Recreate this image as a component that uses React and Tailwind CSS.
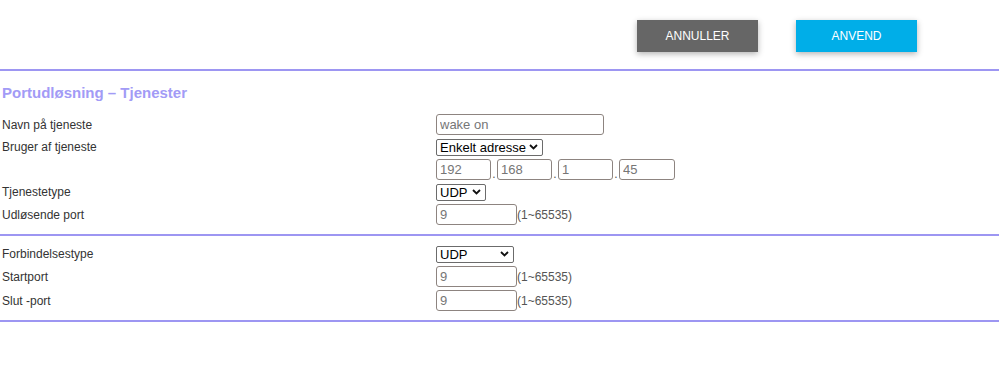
import React from "react";

const Chevron = () => (
  <svg width="9" height="6" viewBox="0 0 9 6" className="pointer-events-none absolute right-[5px] top-1/2 -translate-y-1/2">
    <path d="M1 1l3.5 3.5L8 1" fill="none" stroke="#111" strokeWidth="1.8" />
  </svg>
);

function Select({ value, width }) {
  return (
    <div className="relative" style={{ width }}>
      <select
        defaultValue={value}
        className="h-[17px] w-full appearance-none rounded-[2px] border border-[#6b6b6b] bg-white pl-[3px] text-[13px] leading-[15px] text-black"
      >
        <option>{value}</option>
      </select>
      <Chevron />
    </div>
  );
}

function TextBox({ value, width }) {
  return (
    <input
      defaultValue={value}
      className="h-[21px] rounded-[3px] border border-[#8d8480] bg-white px-[3px] text-[13px] text-[#767676] outline-none"
      style={{ width }}
    />
  );
}

function Row({ label, mt, h, children }) {
  return (
    <div className="flex items-center" style={{ marginTop: mt, height: h }}>
      <div className="w-[436px] pl-[2px] text-[12px] text-[#333]">{label}</div>
      <div className="flex items-center">{children}</div>
    </div>
  );
}

const Range = () => <span className="text-[12px] text-[#555]">(1~65535)</span>;

export default function App() {
  return (
    <div className="h-[384px] w-[999px] bg-white font-['Liberation_Sans',Arial,sans-serif]">
      <div className="flex h-[69px] items-start pt-[20px]">
        <div className="ml-[637px] flex gap-[38px]">
          <button className="h-[32px] w-[121px] bg-[#666666] text-[12px] text-white shadow-[0_2px_6px_rgba(0,0,0,0.3)]">
            ANNULLER
          </button>
          <button className="h-[32px] w-[121px] bg-[#00aee8] text-[12px] text-white shadow-[0_2px_6px_rgba(0,0,0,0.3)]">
            ANVEND
          </button>
        </div>
      </div>
      <div className="h-[2px] bg-[#9d96f2]" />
      <div className="mt-[13px] pl-[2px] text-[15px] font-bold leading-[18px] text-[#a29bf6]">
        Portudløsning – Tjenester
      </div>

      <Row label="Navn på tjeneste" mt={12} h={21}>
        <TextBox value="wake on" width={168} />
      </Row>
      <Row label="Bruger af tjeneste" mt={3} h={17}>
        <Select value="Enkelt adresse" width={107} />
      </Row>
      <Row label="" mt={4} h={21}>
        {["192", "168", "1", "45"].map((v, i) => (
          <div key={v} className="flex items-end">
            {i > 0 && <span className="w-[6px] text-center text-[12px] leading-[12px] text-[#555]">.</span>}
            <TextBox value={v} width={i === 3 ? 56 : 55} />
          </div>
        ))}
      </Row>
      <Row label="Tjenestetype" mt={3} h={17}>
        <Select value="UDP" width={50} />
      </Row>
      <Row label="Udløsende port" mt={4} h={21}>
        <TextBox value="9" width={81} />
        <Range />
      </Row>
      <div className="mt-[9px] h-[2px] bg-[#9d96f2]" />

      <Row label="Forbindelsestype" mt={9} h={17}>
        <Select value="UDP" width={78} />
      </Row>
      <Row label="Startport" mt={4} h={21}>
        <TextBox value="9" width={81} />
        <Range />
      </Row>
      <Row label="Slut -port" mt={3} h={21}>
        <TextBox value="9" width={81} />
        <Range />
      </Row>
      <div className="mt-[9px] h-[2px] bg-[#9d96f2]" />
    </div>
  );
}
